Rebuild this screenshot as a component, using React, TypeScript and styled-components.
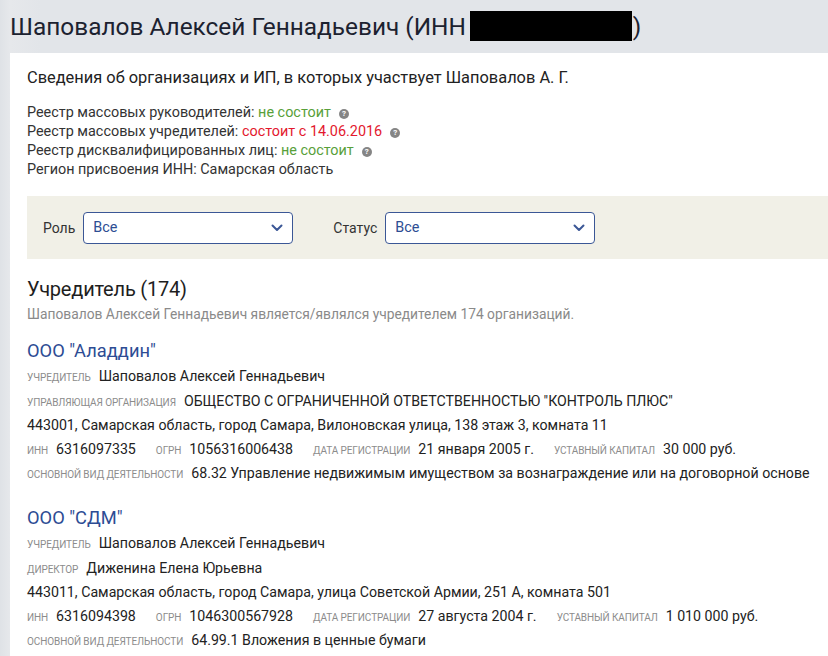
import React from "react";
import styled, { createGlobalStyle } from "styled-components";

const Global = createGlobalStyle`
  html, body { margin: 0; padding: 0; }
  body {
    background: #e3e6ea;
    font-family: Roboto, "Noto Sans", Arial, sans-serif;
    color: #222;
    overflow: hidden;
  }
`;

const Page = styled.div`
  width: 828px;
  height: 656px;
  overflow: hidden;
  background: linear-gradient(90deg, #dfe2e6 0px, #e6e8eb 10px, #e2e5e9 40px);
  padding-left: 10px;
  box-sizing: border-box;
`;

const Header = styled.h1`
  margin: 0;
  height: 53px;
  display: flex;
  align-items: center;
  font-size: 24.4px;
  font-weight: 400;
  color: #1c2230;
  white-space: nowrap;
  padding-bottom: 1px;
  box-sizing: border-box;
`;

const Redacted = styled.span`
  display: inline-block;
  width: 162px;
  height: 30px;
  background: #000;
  margin: 0 1px 0 4px;
`;

const Card = styled.div`
  background: #fff;
  width: 900px;
  padding: 14px 0 0 17px;
  box-sizing: border-box;
  height: 700px;
`;

const Intro = styled.div`
  font-size: 16.4px;
  line-height: 22px;
  color: #222;
  margin-bottom: 13px;
`;

const RegistryList = styled.div`
  display: flex;
  flex-direction: column;
  font-size: 14.4px;
  line-height: 19px;
  color: #333;
  padding-top: 1px;
`;

const Status = styled.span<{ $tone: "ok" | "bad" }>`
  color: ${(p) => (p.$tone === "ok" ? "#58a03a" : "#e3182d")};
`;

const Help = styled.span`
  display: inline-flex;
  align-items: center;
  justify-content: center;
  width: 10px;
  height: 10px;
  border-radius: 50%;
  background: #858585;
  color: #fff;
  font-size: 8px;
  font-weight: 700;
  line-height: 1;
  margin-left: 8px;
  vertical-align: 1px;
`;

const FilterBar = styled.div`
  margin-top: 17px;
  background: #f1f0e7;
  height: 63px;
  display: flex;
  align-items: center;
  padding-left: 16px;
`;

const FilterGroup = styled.label`
  display: flex;
  align-items: center;
  gap: 8px;
  margin-right: 40px;
  font-size: 14px;
  color: #333;
`;

const Select = styled.div`
  width: 210px;
  height: 32px;
  box-sizing: border-box;
  border: 1px solid #3b5796;
  border-radius: 4px;
  background: #fff;
  display: flex;
  align-items: center;
  justify-content: space-between;
  padding: 0 9px 0 9px;
  font-size: 14.4px;
  color: #2d4d93;
`;

const SectionTitle = styled.h2`
  margin: 18px 0 0;
  font-size: 20px;
  font-weight: 400;
  line-height: 24px;
  color: #1e1e1e;
  letter-spacing: -0.2px;
`;

const SectionSub = styled.div`
  font-size: 13.8px;
  line-height: 18px;
  color: #8a8a8a;
  margin-top: 4px;
`;

const Org = styled.div`
  margin-top: 16px;
  & + & {
    margin-top: 19px;
  }
`;

const OrgLink = styled.a`
  display: block;
  font-size: 18.3px;
  line-height: 24px;
  color: #2d4c94;
  text-decoration: none;
  margin-bottom: 2px;
`;

const Line = styled.div`
  font-size: 14.2px;
  line-height: 23.6px;
  color: #222;
  white-space: nowrap;
`;

const Label = styled.span`
  font-size: 10px;
  text-transform: uppercase;
  color: #8c8c8c;
  margin-right: 8px;
  letter-spacing: -0.1px;
`;

const Value = styled.span`
  margin-right: 20px;
`;

const Chevron = () => (
  <svg width="12" height="8" viewBox="0 0 12 8" fill="none">
    <path d="M1.5 1.5 L6 6 L10.5 1.5" stroke="#3b5796" strokeWidth="2" strokeLinecap="round" strokeLinejoin="round" />
  </svg>
);

type Field = { label: string; value: string };
type OrgData = {
  name: string;
  people: Field[];
  address: string;
  ids: Field[];
  activity: string;
};

const orgs: OrgData[] = [
  {
    name: 'ООО "Аладдин"',
    people: [
      { label: "Учредитель", value: "Шаповалов Алексей Геннадьевич" },
      { label: "Управляющая организация", value: 'ОБЩЕСТВО С ОГРАНИЧЕННОЙ ОТВЕТСТВЕННОСТЬЮ "КОНТРОЛЬ ПЛЮС"' },
    ],
    address: "443001, Самарская область, город Самара, Вилоновская улица, 138 этаж 3, комната 11",
    ids: [
      { label: "ИНН", value: "6316097335" },
      { label: "ОГРН", value: "1056316006438" },
      { label: "Дата регистрации", value: "21 января 2005 г." },
      { label: "Уставный капитал", value: "30 000 руб." },
    ],
    activity: "68.32 Управление недвижимым имуществом за вознаграждение или на договорной основе",
  },
  {
    name: 'ООО "СДМ"',
    people: [
      { label: "Учредитель", value: "Шаповалов Алексей Геннадьевич" },
      { label: "Директор", value: "Диженина Елена Юрьевна" },
    ],
    address: "443011, Самарская область, город Самара, улица Советской Армии, 251 А, комната 501",
    ids: [
      { label: "ИНН", value: "6316094398" },
      { label: "ОГРН", value: "1046300567928" },
      { label: "Дата регистрации", value: "27 августа 2004 г." },
      { label: "Уставный капитал", value: "1 010 000 руб." },
    ],
    activity: "64.99.1 Вложения в ценные бумаги",
  },
];

export default function App() {
  return (
    <Page>
      <Global />
      <Header>
        Шаповалов Алексей Геннадьевич (ИНН <Redacted />)
      </Header>
      <Card>
        <Intro>Сведения об организациях и ИП, в которых участвует Шаповалов А. Г.</Intro>
        <RegistryList>
          <div>
            Реестр массовых руководителей: <Status $tone="ok">не состоит</Status>
            <Help>?</Help>
          </div>
          <div>
            Реестр массовых учредителей: <Status $tone="bad">состоит с 14.06.2016</Status>
            <Help>?</Help>
          </div>
          <div>
            Реестр дисквалифицированных лиц: <Status $tone="ok">не состоит</Status>
            <Help>?</Help>
          </div>
          <div>Регион присвоения ИНН: Самарская область</div>
        </RegistryList>
        <FilterBar>
          <FilterGroup>
            Роль
            <Select>
              Все
              <Chevron />
            </Select>
          </FilterGroup>
          <FilterGroup>
            Статус
            <Select>
              Все
              <Chevron />
            </Select>
          </FilterGroup>
        </FilterBar>
        <SectionTitle>Учредитель (174)</SectionTitle>
        <SectionSub>Шаповалов Алексей Геннадьевич является/являлся учредителем 174 организаций.</SectionSub>
        {orgs.map((o) => (
          <Org key={o.name}>
            <OrgLink href="#">{o.name}</OrgLink>
            {o.people.map((p) => (
              <Line key={p.label}>
                <Label>{p.label}</Label>
                {p.value}
              </Line>
            ))}
            <Line>{o.address}</Line>
            <Line>
              {o.ids.map((f) => (
                <React.Fragment key={f.label}>
                  <Label>{f.label}</Label>
                  <Value>{f.value}</Value>
                </React.Fragment>
              ))}
            </Line>
            <Line>
              <Label>Основной вид деятельности</Label>
              {o.activity}
            </Line>
          </Org>
        ))}
      </Card>
    </Page>
  );
}
